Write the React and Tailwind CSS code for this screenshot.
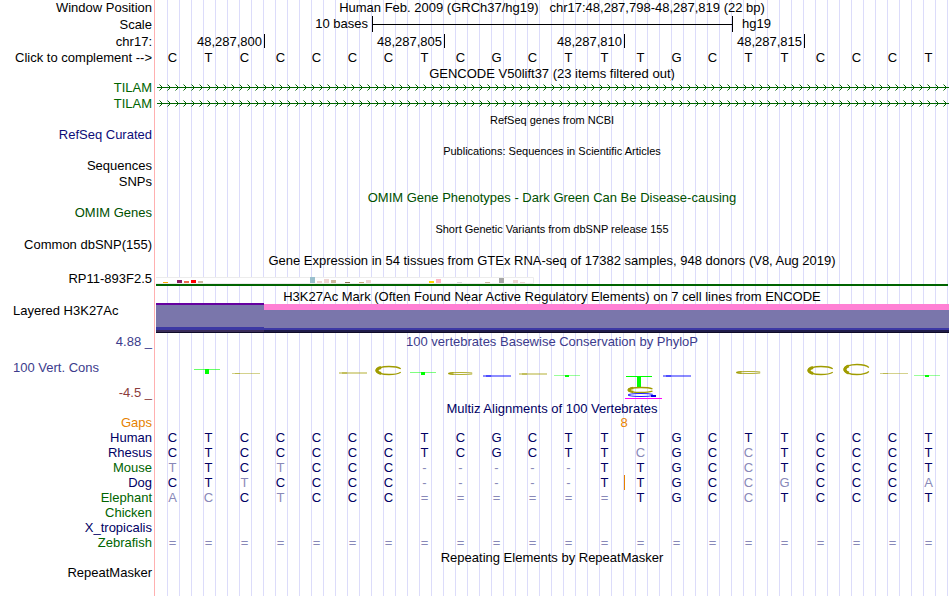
import React from 'react';

const REFERENCE = 'CTCCCCCTCGCTTTGCTTCCCT';

// lower case = base differs from the reference
const species = [
  { name: 'Human', color: 'text-[#000064]', bases: 'CTCCCCCTCGCTTTGCTTCCCT' },
  { name: 'Rhesus', color: 'text-[#000064]', bases: 'CTCCCCCTCGCTTcGCcTCCCT' },
  { name: 'Mouse', color: 'text-[#006400]', bases: 'tTCtCCC-----TTGCcTCCCT' },
  { name: 'Dog', color: 'text-[#000064]', bases: 'CTtCCCC-----TTGCcgCCCa', insertAfter: 12 },
  { name: 'Elephant', color: 'text-[#006400]', bases: 'acCtCCC======TGCcTCCCT' },
  { name: 'Chicken', color: 'text-[#006400]', bases: '' },
  { name: 'X_tropicalis', color: 'text-[#000064]', bases: '' },
  { name: 'Zebrafish', color: 'text-[#006400]', bases: '======================' }
];

// one slot per GTEx tissue, 54 slots of 7 units
const tissues = [
  { slot: 1, height: 1, color: '#ffaa00' },
  { slot: 3, height: 3, color: '#8b1c62' },
  { slot: 4, height: 2, color: '#ee6a50' },
  { slot: 5, height: 3, color: '#ff0000' },
  { slot: 6, height: 2, color: '#cdb79e' },
  { slot: 22, height: 6, color: '#9ac0cd' },
  { slot: 23, height: 2, color: '#eed5d2' },
  { slot: 24, height: 4, color: '#eed5d2' },
  { slot: 25, height: 3, color: '#cdb79e' },
  { slot: 27, height: 1, color: '#8b7355' },
  { slot: 29, height: 1, color: '#cdaa7d' },
  { slot: 30, height: 3, color: '#eed5d2' },
  { slot: 39, height: 2, color: '#ffd700' },
  { slot: 40, height: 4, color: '#ffb6c1' },
  { slot: 43, height: 1, color: '#d9d9d9' },
  { slot: 47, height: 1, color: '#cdb79e' },
  { slot: 49, height: 5, color: '#a6a6a6' },
  { slot: 51, height: 3, color: '#eed5d2' },
  { slot: 52, height: 1, color: '#eed5d2' }
];

// conservation marks: x, top and height inside the 792 x 50 chart
const rings = [
  { x: 219, y: 16, h: 9, side: 3 },
  { x: 291, y: 22, h: 3, side: 1 },
  { x: 471, y: 37, h: 6, side: 2.5 },
  { x: 579, y: 21, h: 3, side: 1 },
  { x: 651, y: 16, h: 9, side: 3 },
  { x: 687, y: 14, h: 11, side: 3 }
];

const dashes = [
  { x: 76, y: 23, h: 1, color: '#a09c00', opacity: 0.45 },
  { x: 183, y: 22, h: 2, color: '#a09c00', opacity: 0.4 },
  { x: 363, y: 23, h: 2, color: '#a09c00', opacity: 0.4 },
  { x: 724, y: 23, h: 1, color: '#a09c00', opacity: 0.45 },
  { x: 327, y: 25, h: 2, color: '#0000ff', opacity: 0.45 },
  { x: 507, y: 25, h: 2, color: '#0000ff', opacity: 0.45 }
];

const stems = [
  { x: 38, y: 19, h: 5, opacity: 0.6 },
  { x: 254, y: 22, h: 3, opacity: 0.5 },
  { x: 398, y: 25, h: 2, opacity: 0.4 },
  { x: 470, y: 26, h: 11, opacity: 1 },
  { x: 758, y: 25, h: 2, opacity: 0.4 }
];

const Row = ({ height = 'h-4', label, labelClass = 'justify-center text-right', children }) => (
  <div className={`flex ${height}`}>
    <div className={`flex w-[155px] shrink-0 flex-col whitespace-nowrap border-r border-[#ffb0b0] pr-0.5 ${labelClass}`}>
      {label}
    </div>
    <div className="ml-px mr-0.5 flex min-w-0 flex-1 flex-col bg-[linear-gradient(to_right,transparent_calc(100%-1px),#dcdcfa_calc(100%-1px))] bg-[length:calc(100%/66)_100%]">
      {children}
    </div>
  </div>
);

const Title = ({ height = 'h-4', className = '', children }) => (
  <Row height={height}>
    <h2 className={`whitespace-nowrap text-center ${className}`}>{children}</h2>
  </Row>
);

const Bases = ({ bases, insertAfter }) => (
  <div className="grid grid-cols-[repeat(22,minmax(0,1fr))]">
    {bases.split('').map((base, i) => (
      <span
        key={i}
        className={`pr-[3px] text-center ${/[A-Z]/.test(base) ? '' : 'text-[#8888b8]'} ${
          i === insertAfter ? '-mr-px border-r border-[#e68200]' : ''
        }`}
      >
        {base.toUpperCase()}
      </span>
    ))}
  </div>
);

const GeneArrows = () => (
  <svg className="mt-1 -mr-px h-[7px] self-stretch" aria-hidden="true">
    <defs>
      <pattern id="intron" width="8" height="7" patternUnits="userSpaceOnUse">
        <path d="M3.5 0.5 L6.5 3.5 L3.5 6.5" fill="none" stroke="#006400" />
      </pattern>
    </defs>
    <rect width="100%" height="7" fill="url(#intron)" />
    <rect x="1" y="3" width="100%" height="1" fill="#006400" />
  </svg>
);

const Expression = () => (
  <svg className="mt-2 h-[9px] w-full" viewBox="0 0 792 9" preserveAspectRatio="none" aria-hidden="true">
    <rect x="0" y="0" width="378" height="7" fill="#ffffff" />
    <path d="M0 0.5 H377.5 V6.5 H0" fill="none" stroke="#ececec" />
    {tissues.map((t) => (
      <rect key={t.slot} x={t.slot * 7} y={6 - t.height} width="5" height={t.height} fill={t.color} />
    ))}
    <rect x="0" y="7" width="792" height="2" fill="#006400" />
  </svg>
);

const Conservation = () => (
  <svg className="h-[50px] w-full" viewBox="0 0 792 50" preserveAspectRatio="none" aria-hidden="true">
    {dashes.map((d) => (
      <g key={d.x} fill={d.color}>
        <rect x={d.x} y={d.y} width="28" height={d.h} opacity={d.opacity} />
        <rect x={d.x + 3} y={d.y} width="5" height={d.h} opacity={d.opacity} />
      </g>
    ))}
    {stems.map((s) => (
      <g key={s.x} fill="#00ff00">
        <rect x={s.x} y={s.y} width="26" height="1" opacity={s.opacity} />
        <rect x={s.x + 11} y={s.y} width="4" height={s.h} />
      </g>
    ))}
    {rings.map((r) => (
      <g key={r.x} fill="none" stroke="#a09c00">
        <ellipse
          cx={r.x + 14}
          cy={r.y + r.h / 2}
          rx="13"
          ry={r.h / 2 - 0.5}
          pathLength="100"
          strokeWidth={r.h > 3 ? 1.3 : 0.8}
          strokeDasharray="92 8"
          strokeDashoffset="-4"
        />
        <ellipse
          cx={r.x + 14}
          cy={r.y + r.h / 2}
          rx="12"
          ry={r.h / 2 - 0.5}
          pathLength="100"
          strokeWidth={r.side}
          strokeDasharray="20 80"
          strokeDashoffset="-40"
        />
      </g>
    ))}
    <ellipse
      cx="485"
      cy="45"
      rx="13"
      ry="1.5"
      fill="none"
      stroke="#2020ff"
      pathLength="100"
      strokeDasharray="94 6"
      strokeDashoffset="-3"
    />
    <rect x="495" y="45" width="5" height="2" fill="#0000e0" />
    <rect x="469" y="48" width="37" height="1" fill="#ff00ff" />
  </svg>
);

const App = () => {
  return (
    <main className="flex min-h-screen flex-col overflow-hidden bg-white font-['Liberation_Sans',Arial,sans-serif] text-[13px] leading-4 text-black">
      {/* Position and ruler */}
      <Row label="Window Position">
        <h1 className="whitespace-nowrap text-center">
          Human Feb. 2009 (GRCh37/hg19){'\u00a0\u00a0\u00a0'}chr17:48,287,798-48,287,819 (22 bp)
        </h1>
      </Row>
      <Row height="h-[18px]" label="Scale">
        <div className="grid grid-cols-[repeat(22,minmax(0,1fr))] items-center">
          <span className="col-span-6 pr-1 text-right">10 bases</span>
          <div className="col-span-10 -mr-px flex h-4 items-center border-x border-black">
            <div className="h-px flex-1 bg-black" />
          </div>
          <span className="col-span-6 pl-2.5">hg19</span>
        </div>
      </Row>
      <Row label="chr17:">
        <div className="grid grid-cols-[repeat(22,minmax(0,1fr))] text-right">
          <span className="col-span-3 -mr-px h-3.5 border-r border-black pr-0.5">48,287,800</span>
          <span className="col-span-5 -mr-px h-3.5 border-r border-black pr-0.5">48,287,805</span>
          <span className="col-span-5 -mr-px h-3.5 border-r border-black pr-0.5">48,287,810</span>
          <span className="col-span-5 -mr-px h-3.5 border-r border-black pr-0.5">48,287,815</span>
        </div>
      </Row>
      <Row label="Click to complement -->">
        <Bases bases={REFERENCE} />
      </Row>

      {/* Genes */}
      <Title height="h-3.5">GENCODE V50lift37 (23 items filtered out)</Title>
      <Row label="TILAM" labelClass="justify-center text-right text-[#006400]">
        <GeneArrows />
      </Row>
      <Row label="TILAM" labelClass="justify-center text-right text-[#006400]">
        <GeneArrows />
      </Row>
      <Title height="h-[15px]" className="text-[11px]">RefSeq genes from NCBI</Title>
      <Row label="RefSeq Curated" labelClass="justify-center text-right text-[#0c0c78]" />

      {/* Literature and variants */}
      <Title height="h-[15px]" className="text-[11px]">Publications: Sequences in Scientific Articles</Title>
      <Row label="Sequences" />
      <Row label="SNPs" />
      <Title height="h-[15px]" className="text-[#005000]">OMIM Gene Phenotypes - Dark Green Can Be Disease-causing</Title>
      <Row label="OMIM Genes" labelClass="justify-center text-right text-[#005000]" />
      <Title height="h-[15px]" className="text-[11px]">Short Genetic Variants from dbSNP release 155</Title>
      <Row height="h-[17px]" label="Common dbSNP(155)" />

      {/* Expression */}
      <Title>Gene Expression in 54 tissues from GTEx RNA-seq of 17382 samples, 948 donors (V8, Aug 2019)</Title>
      <Row height="h-5" label="RP11-893F2.5">
        <Expression />
      </Row>

      {/* Regulation */}
      <Title height="h-3.5">H3K27Ac Mark (Often Found Near Active Regulatory Elements) on 7 cell lines from ENCODE</Title>
      <Row height="h-[31px]" label="Layered H3K27Ac" labelClass="pl-[13px] text-left">
        <div className="-mr-px grid h-[30px] grid-cols-[3fr_19fr]">
          <div className="flex flex-col">
            <div className="h-0.5 bg-[#6600a0]" />
            <div className="flex-1 bg-[#7a76ab]" />
            <div className="h-[3px] bg-[#3c38a4]" />
            <div className="h-0.5 bg-[#3a2c58]" />
            <div className="h-px bg-[#100c28]" />
          </div>
          <div className="flex flex-col pt-px">
            <div className="h-1.5 bg-[#ff80d4]" />
            <div className="flex-1 bg-[#7a76ab]" />
            <div className="h-0.5 bg-[#3c38a4]" />
            <div className="h-0.5 bg-[#201c48]" />
            <div className="h-px bg-[#100c28]" />
          </div>
        </div>
      </Row>

      {/* Conservation */}
      <Row
        height="h-[67px]"
        labelClass="justify-between text-right"
        label={
          <>
            <span className="text-[#3c3c8c]">4.88 _</span>
            <span className="pl-[13px] text-left text-[#3c3c8c]">100 Vert. Cons</span>
            <span className="text-[#8c3c3c]">-4.5 _</span>
          </>
        }
      >
        <h2 className="whitespace-nowrap text-center text-[#3c3c8c]">100 vertebrates Basewise Conservation by PhyloP</h2>
        <Conservation />
      </Row>

      {/* Alignment */}
      <Title height="h-3.5" className="text-[#000064]">Multiz Alignments of 100 Vertebrates</Title>
      <Row height="h-[15px]" label="Gaps" labelClass="justify-center text-right text-[#e68200]">
        <div className="grid grid-cols-[repeat(22,minmax(0,1fr))] text-center text-[#e68200]">
          <span className="col-span-2 col-start-13">8</span>
        </div>
      </Row>
      {species.map((s) => (
        <Row key={s.name} height="h-[15px]" label={s.name} labelClass={`justify-center text-right ${s.color}`}>
          <div className="leading-[15px] text-[#000064]">
            <Bases bases={s.bases} insertAfter={s.insertAfter} />
          </div>
        </Row>
      ))}

      {/* Repeats */}
      <Title>Repeating Elements by RepeatMasker</Title>
      <Row height="h-3.5" label="RepeatMasker" />
      <Row height="flex-1" />
    </main>
  );
};

export default App;
